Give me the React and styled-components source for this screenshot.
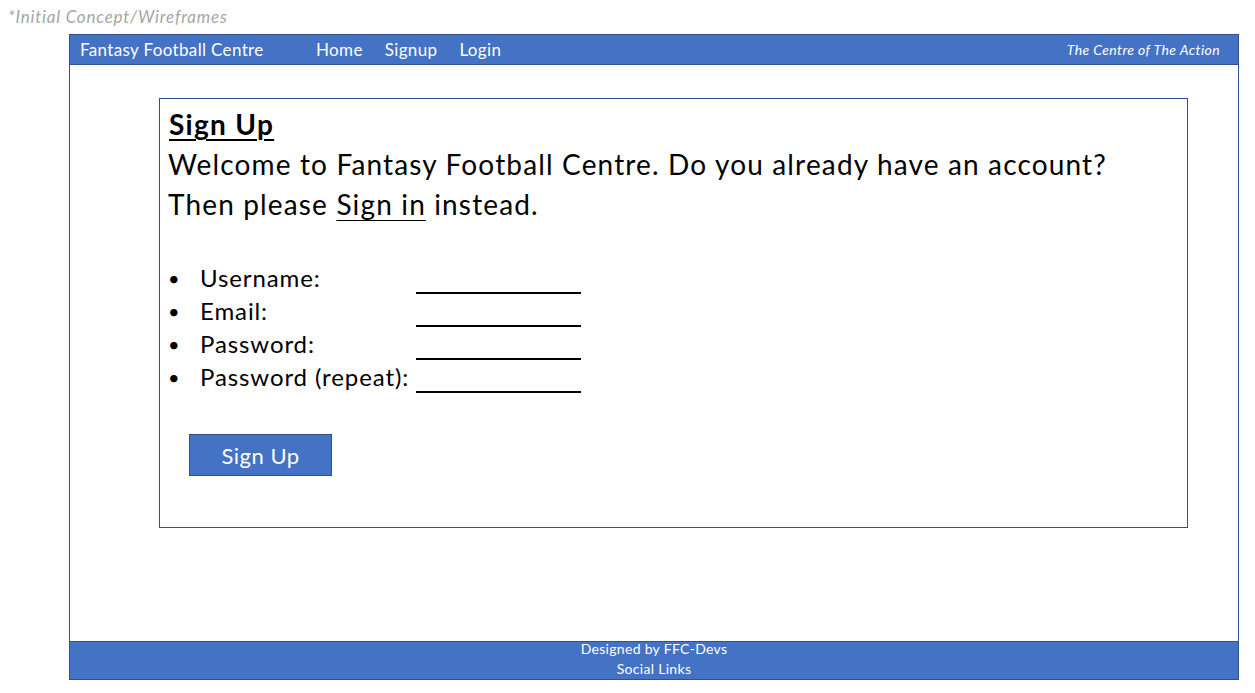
import React from "react"
import styled, { createGlobalStyle } from "styled-components"

const Global = createGlobalStyle`
    body {
        margin: 0;
        background: #fff;
        font-family: Lato, "Open Sans", sans-serif;
        color: #000;
    }
`
const Page = styled.div`
    width: 1255px;
    height: 693px;
`
const Caption = styled.div`
    padding: 6px 0 0 8px;
    height: 34px;
    box-sizing: border-box;
    font-style: italic;
    font-size: 17px;
    letter-spacing: 0.8px;
    color: #a6a6a6;
`
const Frame = styled.div`
    margin-left: 69px;
    width: 1170px;
    height: 646px;
    box-sizing: border-box;
    border: 1px solid #2f528f;
    display: flex;
    flex-direction: column;
`
const Header = styled.header`
    height: 29px;
    background: #4472c4;
    border-bottom: 1px solid #2f528f;
    display: flex;
    align-items: center;
    padding: 0 18px 0 10px;
    color: #fff;
    letter-spacing: 0.35px;
`
const Brand = styled.div`
    font-size: 17px;
    width: 236px;
`
const Nav = styled.nav`
    display: flex;
    gap: 22px;
    font-size: 17px;
`
const Tagline = styled.div`
    margin-left: auto;
    font-size: 14px;
    letter-spacing: 0.4px;
    font-style: italic;
`
const Main = styled.main`
    flex: 1;
    padding: 33px 50px 0 89px;
`
const Card = styled.section`
    height: 430px;
    box-sizing: border-box;
    border: 1px solid #2f528f;
    padding: 5px 9px 0 8px;
`
const Title = styled.h1`
    margin: 0 0 0 1px;
    font-size: 28px;
    line-height: 40px;
    font-weight: 700;
    letter-spacing: 1.3px;
    text-decoration: underline;
    text-underline-offset: 4px;
    text-decoration-thickness: 2px;
`
const Intro = styled.p`
    margin: 0;
    font-size: 28px;
    line-height: 40px;
    letter-spacing: 1.15px;
`
const Link = styled.span`
    text-decoration: underline;
    text-underline-offset: 5px;
    text-decoration-thickness: 1px;
`
const Fields = styled.ul`
    list-style: none;
    margin: 37px 0 0;
    padding: 0;
`
const Field = styled.li`
    display: flex;
    align-items: center;
    height: 33px;
    font-size: 24px;
    letter-spacing: 0.9px;
`
const Bullet = styled.span`
    width: 32px;
    font-size: 20px;
`
const Label = styled.span`
    width: 216px;
`
const Blank = styled.span`
    width: 165px;
    height: 2px;
    background: #000;
    align-self: flex-end;
    margin-bottom: 0;
`
const Button = styled.button`
    margin: 41px 0 0 21px;
    width: 143px;
    height: 42px;
    background: #4472c4;
    border: 1px solid #2f528f;
    color: #fff;
    font-family: inherit;
    font-size: 22px;
    letter-spacing: 0.5px;
    padding: 0;
`
const Footer = styled.footer`
    height: 37px;
    background: #4472c4;
    border-top: 1px solid #2f528f;
    color: #fff;
    font-size: 14px;
    letter-spacing: 0.3px;
    line-height: 20px;
    text-align: center;
`
const Lines = styled.div`
    margin-top: -3px;
`

const fields = ["Username:", "Email:", "Password:", "Password (repeat):"]

export default function App() {
    return (
        <Page>
            <Global />
            <Caption>*Initial Concept/Wireframes</Caption>
            <Frame>
                <Header>
                    <Brand>Fantasy Football Centre</Brand>
                    <Nav>
                        <span>Home</span>
                        <span>Signup</span>
                        <span>Login</span>
                    </Nav>
                    <Tagline>The Centre of The Action</Tagline>
                </Header>
                <Main>
                    <Card>
                        <Title>Sign Up</Title>
                        <Intro>
                            Welcome to Fantasy Football Centre. Do you already have an account?
                            <br />
                            Then please <Link>Sign in</Link> instead.
                        </Intro>
                        <Fields>
                            {fields.map((f) => (
                                <Field key={f}>
                                    <Bullet>•</Bullet>
                                    <Label>{f}</Label>
                                    <Blank />
                                </Field>
                            ))}
                        </Fields>
                        <Button>Sign Up</Button>
                    </Card>
                </Main>
                <Footer>
                    <Lines>
                        <div>Designed by FFC-Devs</div>
                        <div>Social Links</div>
                    </Lines>
                </Footer>
            </Frame>
        </Page>
    )
}
